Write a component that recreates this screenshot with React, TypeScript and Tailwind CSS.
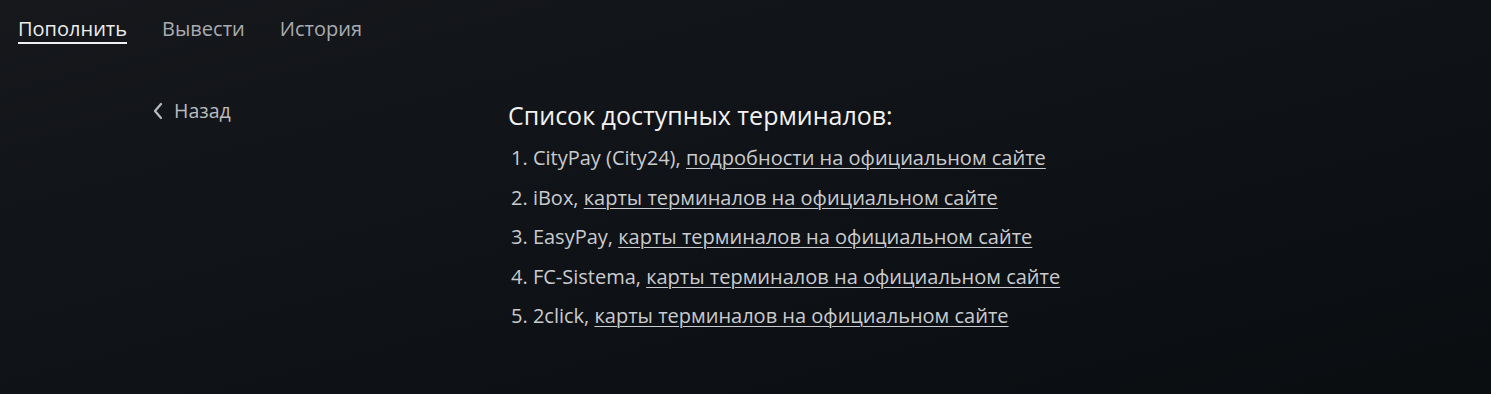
import React from "react";

const items = [
  { name: "CityPay (City24)", link: "подробности на официальном сайте" },
  { name: "iBox", link: "карты терминалов на официальном сайте" },
  { name: "EasyPay", link: "карты терминалов на официальном сайте" },
  { name: "FC-Sistema", link: "карты терминалов на официальном сайте" },
  { name: "2click", link: "карты терминалов на официальном сайте" },
];

export default function App() {
  return (
    <div
      className="w-[1491px] h-[394px] overflow-hidden bg-gradient-to-br from-[#16181c] via-[#0f1216] to-[#0b0e11] text-[#e6e6e6]"
      style={{ fontFamily: '"Open Sans", "Noto Sans", sans-serif' }}
    >
      <nav className="flex items-start gap-[35px] pl-[18px] pt-[15px]">
        <div className="flex flex-col">
          <span className="text-[20px] leading-[28px] text-[#ececec]">Пополнить</span>
          <span className="-mt-[1px] h-[2px] bg-[#f0f0f0]" />
        </div>
        <span className="text-[20px] leading-[28px] text-[#a9acb1]">Вывести</span>
        <span className="text-[20px] leading-[28px] text-[#a9acb1]">История</span>
      </nav>
      <div className="flex pt-[51px]">
        <div className="w-[508px] pl-[152px] pt-[2px]">
          <div className="flex items-center gap-[10px] text-[#b9bcc0]">
            <svg width="12" height="18" viewBox="0 0 12 18" fill="none">
              <path d="M9 2 L3 9 L9 16" stroke="#b9bcc0" strokeWidth="2.2" strokeLinecap="round" strokeLinejoin="round" />
            </svg>
            <span className="text-[19.5px] leading-[28px]">Назад</span>
          </div>
        </div>
        <div className="flex flex-col">
          <h2 className="text-[25px] leading-[34px] text-[#f2f2f2] pt-[3px]">Список доступных терминалов:</h2>
          <ol className="mt-[12px] pl-[3px] flex flex-col gap-[11.5px] text-[20px] leading-[28px] text-[#c9cbce]">
            {items.map((it, i) => (
              <li key={i}>
                {i + 1}. {it.name},{" "}
                <a className="underline underline-offset-[3px] decoration-1 text-[#c9cbce]" href="#">
                  {it.link}
                </a>
              </li>
            ))}
          </ol>
        </div>
      </div>
    </div>
  );
}
